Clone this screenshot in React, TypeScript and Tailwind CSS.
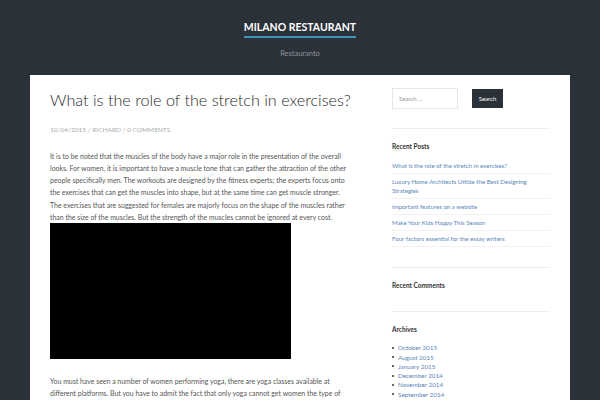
import React from 'react';

const recentPosts = [
  'What is the role of the stretch in exercises?',
  'Luxury Home Architects Utilize the Best Designing Strategies',
  'Important features on a website',
  'Make Your Kids Happy This Season',
  'Four factors essential for the essay writers',
];

const archives = ['October 2015', 'August 2015', 'January 2015', 'December 2014', 'November 2014', 'September 2014', 'August 2014'];

const App: React.FC = () => {
  return (
    <div className="w-[600px] h-[400px] overflow-hidden bg-[#2b3139]" style={{ fontFamily: 'Lato, "Open Sans", sans-serif' }}>
      {/* site header */}
      <header className="flex flex-col items-center h-[75px] pt-[20px]">
        <div className="text-[10.5px] leading-[14px] font-bold text-white pb-[2px] border-b-2 border-[#3f94b8]">
          MILANO RESTAURANT
        </div>
        <div className="mt-[10px] text-[7.5px] text-[#8d939b]">Restauranto</div>
      </header>

      <div className="mx-[30px] bg-white h-[400px] flex pl-[20px] pt-[13px]">
        {/* main column */}
        <main className="w-[302px] shrink-0">
          <h1 className="text-[16.2px] leading-[24px] font-light text-[#2b2b2b] whitespace-nowrap">What is the role of the stretch in exercises?</h1>
          <div className="mt-[13px] text-[6.5px] uppercase text-[#a7adb3]">10/04/2015 / Richard / 0 Comments</div>
          <p className="mt-[15px] text-[6.95px] leading-[12.2px] text-[#555]">
            It is to be noted that the muscles of the body have a major role in the presentation of the overall looks. For women, it is important to have a muscle tone that can gather the attraction of the other people specifically men. The workouts are designed by the fitness experts; the experts focus onto the exercises that can get the muscles into shape, but at the same time can get muscle stronger. The exercises that are suggested for females are majorly focus on the shape of the muscles rather than the size of the muscles. But the strength of the muscles cannot be ignored at every cost.
          </p>
          <div className="w-[241px] h-[136px] bg-black" />
          <p className="mt-[16px] text-[6.95px] leading-[12.2px] text-[#555]">
            You must have seen a number of women performing yoga, there are yoga classes available at different platforms. But you have to admit the fact that only yoga cannot get women the type of
          </p>
        </main>

        {/* sidebar */}
        <aside className="ml-[40px] w-[158px] shrink-0">
          <div className="flex items-center">
            <div className="w-[66px] h-[21px] border border-[#e6e6e6] flex items-center pl-[6px] text-[6px] text-[#999]">Search …</div>
            <div className="ml-[14px] w-[31px] h-[19px] bg-[#2b3139] text-white text-[6px] flex items-center justify-center">Search</div>
          </div>
          <div className="mt-[19px] border-t border-[#eeeeee]" />

          <div className="mt-[13px] text-[6.5px] font-bold text-[#333]">Recent Posts</div>
          <ul className="mt-[6px]">
            {recentPosts.map((p) => (
              <li key={p} className="border-b border-[#f2f2f2] py-[3px] text-[6.1px] leading-[9px] text-[#5a86b8]">{p}</li>
            ))}
          </ul>
          <div className="mt-[20px] border-t border-[#eeeeee]" />

          <div className="mt-[13px] text-[6.5px] font-bold text-[#333]">Recent Comments</div>
          <div className="mt-[20px] border-t border-[#eeeeee]" />

          <div className="mt-[13px] text-[6.5px] font-bold text-[#333]">Archives</div>
          <ul className="mt-[9px]">
            {archives.map((a) => (
              <li key={a} className="flex items-center text-[6.3px] leading-[9.3px] text-[#5a86b8]">
                <span className="w-[2px] h-[2px] rounded-full bg-[#333] mr-[4px]" />
                {a}
              </li>
            ))}
          </ul>
        </aside>
      </div>
    </div>
  );
};

export default App;
